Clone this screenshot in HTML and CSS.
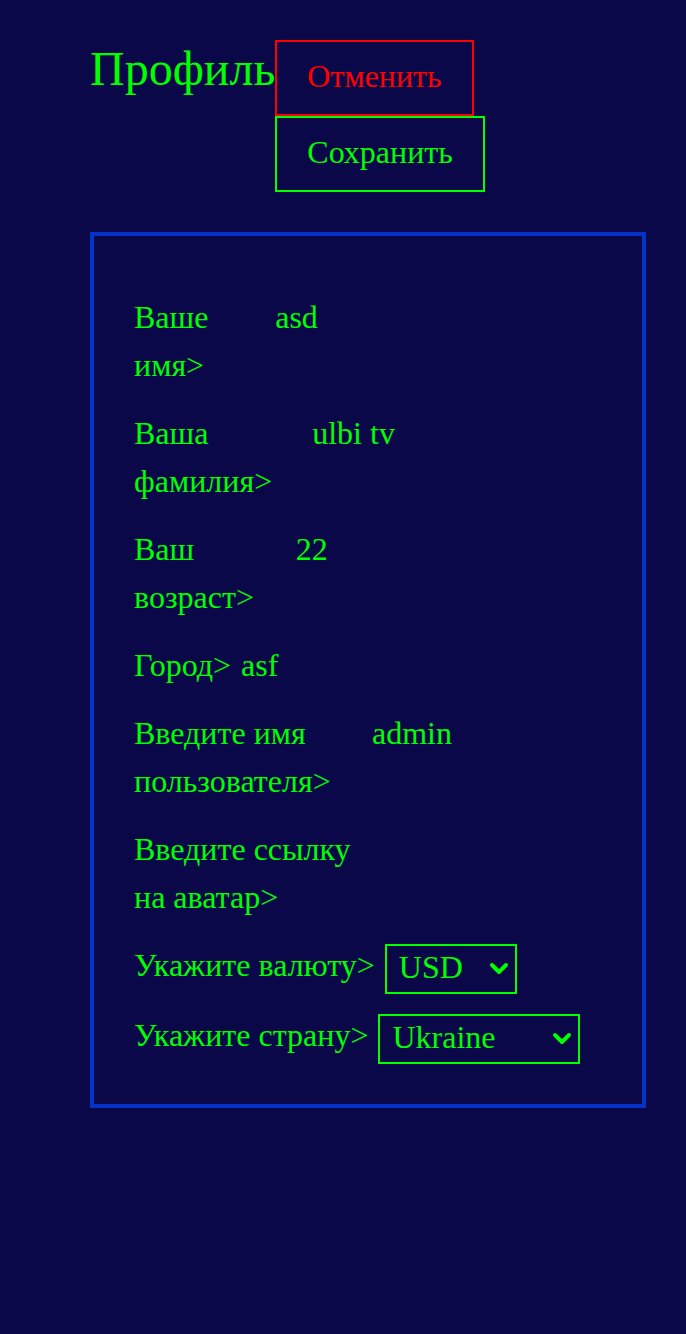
FILE: index.html
```html
<!DOCTYPE html>
<html lang="ru">
<head>
<meta charset="utf-8">
<title>Профиль</title>
<link rel="stylesheet" href="styles.css">
</head>
<body>
<div class="page">
  <header class="header">
    <h1 class="title">Профиль</h1>
    <div class="actions">
      <button class="btn btn-cancel" type="button">Отменить</button>
      <button class="btn btn-save" type="button">Сохранить</button>
    </div>
  </header>
  <section class="card">
    <div class="row"><label class="label">Ваше имя&gt;</label><input class="field" type="text" value="asd"></div>
    <div class="row"><label class="label">Ваша фамилия&gt;</label><input class="field" type="text" value="ulbi tv"></div>
    <div class="row"><label class="label">Ваш возраст&gt;</label><input class="field" type="text" value="22"></div>
    <div class="row"><label class="label">Город&gt;</label><input class="field" type="text" value="asf"></div>
    <div class="row"><label class="label">Введите имя пользователя&gt;</label><input class="field" type="text" value="admin"></div>
    <div class="row"><label class="label">Введите ссылку на аватар&gt;</label><input class="field" type="text" value=""></div>
    <div class="selects">
      <div class="row row-select"><label class="label">Укажите валюту&gt;</label>
        <span class="select-wrap select-currency">
          <select class="select"><option>USD</option><option>EUR</option><option>RUB</option></select>
          <svg class="chevron" viewBox="0 0 20 14" width="20" height="14"><path d="M3 3 L10 10 L17 3" fill="none" stroke="#00ff00" stroke-width="4" stroke-linecap="round" stroke-linejoin="round"/></svg>
        </span>
      </div>
      <div class="row row-select"><label class="label">Укажите страну&gt;</label>
        <span class="select-wrap select-country">
          <select class="select"><option>Ukraine</option><option>Russia</option><option>Belarus</option><option>Kazakhstan</option><option>Armenia</option></select>
          <svg class="chevron" viewBox="0 0 20 14" width="20" height="14"><path d="M3 3 L10 10 L17 3" fill="none" stroke="#00ff00" stroke-width="4" stroke-linecap="round" stroke-linejoin="round"/></svg>
        </span>
      </div>
    </div>
  </section>
</div>
</body>
</html>
```
FILE: styles.css
```css
html, body {
  margin: 0;
  background: #0a0849;
}
body {
  font-family: "Liberation Serif", "Times New Roman", serif;
  color: #00ff00;
  min-height: 1334px;
}
.page {
  padding: 40px 40px 0 90px;
}
.header {
  display: flex;
  align-items: flex-start;
}
.title {
  margin: 0;
  font-weight: normal;
  font-size: 48px;
  line-height: 58px;
  color: #00ff00;
}
.actions {
  display: flex;
  flex-direction: column;
  align-items: flex-start;
}
.btn {
  font-family: inherit;
  font-size: 32px;
  line-height: 38px;
  background: transparent;
  padding: 15px 30px 19px;
  margin: 0;
  cursor: pointer;
}
.btn-cancel {
  color: #ff0000;
  border: 2px solid #ff0000;
}
.btn-save {
  color: #00ff00;
  border: 2px solid #00ff00;
}
.card {
  margin-top: 40px;
  border: 4px solid #0433c8;
  padding: 57px 40px 40px;
  display: flex;
  flex-direction: column;
  gap: 20px;
}
.selects {
  display: flex;
  flex-direction: column;
  gap: 17px;
}
.row {
  display: flex;
  align-items: baseline;
  gap: 10px;
  font-size: 32px;
  line-height: 48px;
}
.row-select {
  align-items: flex-start;
}
.label {
  color: #00ff00;
}
.field {
  width: 380px;
  min-width: 0;
  padding: 0;
  margin: 0;
  border: none;
  outline: none;
  background: transparent;
  color: #00ff00;
  font-family: inherit;
  font-size: 32px;
  line-height: 48px;
}
.select-wrap {
  position: relative;
  display: inline-block;
  flex-shrink: 0;
  margin-top: 3px;
}
.select {
  appearance: none;
  -webkit-appearance: none;
  box-sizing: border-box;
  height: 50px;
  margin: 0;
  border: 2px solid #00ff00;
  border-radius: 0;
  background: transparent;
  color: #00ff00;
  font-family: inherit;
  font-size: 32px;
  padding: 0 40px 5px 12px;
  vertical-align: top;
}
.select option {
  background: #0a0849;
}
.select-currency .select {
  width: 132px;
}
.select-country .select {
  width: 202px;
}
.chevron {
  position: absolute;
  right: 8px;
  top: 18px;
  pointer-events: none;
}
```
